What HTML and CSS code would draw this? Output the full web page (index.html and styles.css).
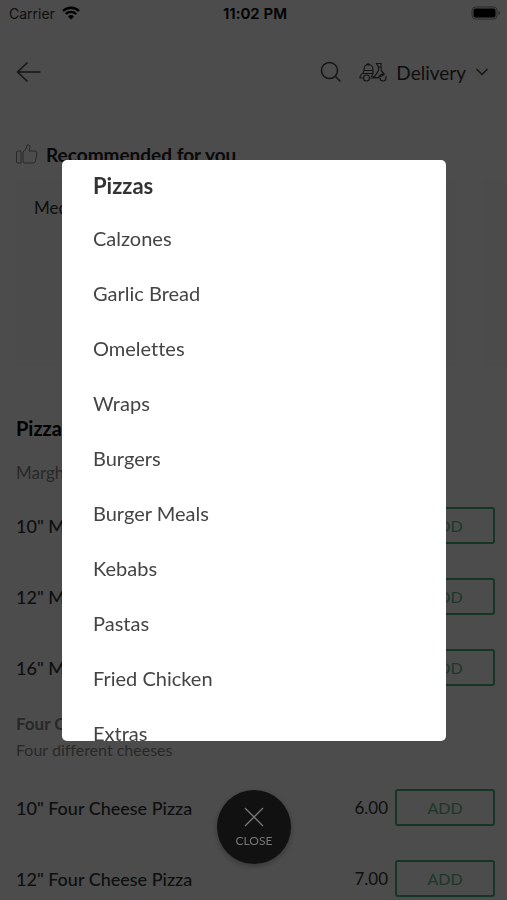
FILE: index.html
```html
<!DOCTYPE html>
<html lang="en">
<head>
  <meta charset="utf-8">
  <meta name="viewport" content="width=device-width, initial-scale=1">
  <title>Menu</title>
  <link rel="stylesheet" href="styles.css">
</head>
<body>
  <div class="page">
    <div class="status-bar">
      <div class="carrier">
        <span>Carrier</span>
        <svg class="wifi" viewBox="0 0 18 14" width="18" height="14">
          <path d="M1 5a11.5 11.5 0 0 1 16 0M3.8 8a7.4 7.4 0 0 1 10.4 0" fill="none" stroke="#000" stroke-width="2.4"/>
          <path d="M9 13.5L6 10.4a4.3 4.3 0 0 1 6 0z"/>
        </svg>
      </div>
      <div class="time">11:02 PM</div>
      <div class="battery">
        <svg viewBox="0 0 30 14" width="30" height="14">
          <rect x="1" y="1" width="25" height="12" rx="3.5" fill="none" stroke="#888"/>
          <rect x="2.5" y="2.5" width="22" height="9" rx="2"/>
          <path d="M27.5 5v4q1.5-.6 1.5-2t-1.5-2z" fill="#888"/>
        </svg>
      </div>
    </div>

    <header class="header">
      <button class="icon-button" aria-label="Back">
        <svg class="icon" viewBox="0 0 26 22" width="26" height="22"><path d="M24.500 11H2M11.500 1.500L1.500 11l10 9.500"/></svg>
      </button>
      <div class="header-actions">
        <button class="icon-button" aria-label="Search">
          <svg class="icon" viewBox="0 0 22 22" width="22" height="22"><circle cx="9.500" cy="9.500" r="8"/><path d="M15.500 15.500l5 5"/></svg>
        </button>
        <button class="delivery">
          <svg class="icon scooter" viewBox="0 0 28 20" width="28" height="20">
            <path d="M5 8.500c0-3.500 1.500-5.500 3-5.500h3c2 0 3 2.500 3 5.500v3M5 8.500h9M7.500 3c0-1.500 3.500-1.500 3.500 0M5 8.500l-1 3M4 11.500h10M4 11.500c-2 .5-3 2.500-3 4.500h3.500M14 11.500l-1.500 3.500M10.500 16h9"/>
            <path d="M17.500 1.500h4.500v3.500h-2.500zM19.500 5v3.500l-3.500 5.500-2 1M22 5l.5 4 3 3.500M19.500 16c0-2.500 3-4.500 6-3.500M14 15.500h5.500l6-3"/>
            <circle cx="7.500" cy="16" r="3"/><path d="M21 16a3 3 0 0 0 6 0v-2"/>
          </svg>
          <span>Delivery</span>
          <svg class="icon" viewBox="0 0 14 10" width="14" height="10"><path d="M1.500 2L7 7.500 12.500 2"/></svg>
        </button>
      </div>
    </header>

    <section class="recommended">
      <h2 class="recommended-title">
        <svg class="thumb" viewBox="0 0 22 20" width="22" height="20">
          <path d="M1.500 7h3.500v12H1.500q-1 0-1-1V8q0-1 1-1zM7 8l3-3 1-4q3-.8 3 2.500L13 7h6q2 0 2 2l-1.500 8q-.5 2-2.500 2H9q-2 0-2-2z"/>
        </svg>
        Recommended for you
      </h2>
      <div class="cards">
        <div class="card">Mediterranean Pizza</div>
        <div class="card"></div>
      </div>
    </section>

    <section class="menu">
      <h2 class="menu-title">Pizzas</h2>
      <div class="group single">
        <h3 class="group-title">Margherita</h3>
      </div>
      <div class="item"><span class="item-name">10" Margherita</span><span class="price">5.00</span><button class="add">ADD</button></div>
      <div class="item"><span class="item-name">12" Margherita</span><span class="price">6.00</span><button class="add">ADD</button></div>
      <div class="item"><span class="item-name">16" Margherita</span><span class="price">9.00</span><button class="add">ADD</button></div>
      <div class="group">
        <h3 class="group-title">Four Cheese Pizza</h3>
        <p class="group-text">Four different cheeses</p>
      </div>
      <div class="item"><span class="item-name">10" Four Cheese Pizza</span><span class="price">6.00</span><button class="add">ADD</button></div>
      <div class="item"><span class="item-name">12" Four Cheese Pizza</span><span class="price">7.00</span><button class="add">ADD</button></div>
    </section>
  </div>

  <div class="overlay">
    <nav class="categories">
      <a class="category active" href="#">Pizzas</a>
      <a class="category" href="#">Calzones</a>
      <a class="category" href="#">Garlic Bread</a>
      <a class="category" href="#">Omelettes</a>
      <a class="category" href="#">Wraps</a>
      <a class="category" href="#">Burgers</a>
      <a class="category" href="#">Burger Meals</a>
      <a class="category" href="#">Kebabs</a>
      <a class="category" href="#">Pastas</a>
      <a class="category" href="#">Fried Chicken</a>
      <a class="category" href="#">Extras</a>
    </nav>
    <button class="close">
      <svg viewBox="0 0 20 20" width="20" height="20"><path d="M1 1l18 18M19 1L1 19" fill="none" stroke="#777" stroke-width="1.300"/></svg>
      CLOSE
    </button>
  </div>
</body>
</html>
```

FILE: styles.css
```css
* {
  box-sizing: border-box;
}

body {
  margin: 0;
  background: #fff;
  color: #333;
  font-family: Lato, "Liberation Sans", sans-serif;
  font-variant-ligatures: none;
}

h2, h3, p {
  margin: 0;
}

button {
  font-family: inherit;
  color: inherit;
  background: none;
  border: none;
  padding: 0;
  cursor: pointer;
}

svg {
  display: block;
}

.page {
  height: 100vh;
  overflow: hidden;
}

.status-bar {
  display: grid;
  grid-template-columns: 1fr auto 1fr;
  align-items: center;
  height: 26px;
  padding: 0 6px 0 9px;
  font-family: Inter, "Liberation Sans", sans-serif;
  font-size: 14px;
  color: #000;
}

.carrier {
  display: flex;
  align-items: center;
  gap: 7px;
  color: #333;
}

.time {
  font-size: 15px;
  font-weight: 600;
}

.battery {
  justify-self: end;
}

.header {
  display: flex;
  justify-content: space-between;
  align-items: center;
  height: 92px;
  padding: 0 18px 0 16px;
}

.header-actions {
  display: flex;
  align-items: center;
  gap: 17px;
}

.icon {
  fill: none;
  stroke: #444;
  stroke-width: 1.5;
}

.scooter {
  stroke-width: 1.2;
}

.delivery {
  display: flex;
  align-items: center;
  gap: 9px;
  font-size: 19px;
}

.recommended {
  padding-top: 24px;
}

.recommended-title {
  display: flex;
  align-items: center;
  gap: 8px;
  height: 24px;
  padding: 0 16px;
  font-size: 19px;
  color: #222;
}

.thumb {
  fill: none;
  stroke: #888;
}

.cards {
  display: flex;
  gap: 28px;
  padding: 14px 0 0 16px;
  overflow: hidden;
}

.card {
  flex: 0 0 440px;
  height: 186px;
  padding: 17px 18px;
  font-size: 17px;
  background: #fafafa;
}

.menu {
  padding: 49px 12px 0 16px;
}

.menu-title {
  margin-bottom: 11px;
  font-size: 20px;
  line-height: 26px;
  color: #000;
}

.group {
  padding: 8px 0 9px;
  color: #888;
}

.group-title {
  font-size: 17px;
  line-height: 26px;
}

.group.single {
  padding-bottom: 4px;
}

.group.single .group-title {
  font-weight: normal;
}

.group-text {
  font-size: 16px;
  line-height: 26px;
}

.item {
  display: flex;
  align-items: center;
  height: 71px;
  font-size: 17px;
}

.item-name {
  flex: 1;
  font-size: 18px;
  font-weight: 500;
}

.price {
  margin-right: 7px;
}

.add {
  width: 100px;
  height: 37px;
  border: 2px solid #46b478;
  border-radius: 3px;
  font-size: 16px;
  color: #5fb98a;
}

.overlay {
  position: fixed;
  inset: 0;
  display: flex;
  flex-direction: column;
  align-items: center;
  gap: 49px;
  padding: 160px 61px 36px 62px;
  background: rgba(0, 0, 0, 0.7);
}

.categories {
  flex: 1;
  width: 100%;
  min-height: 0;
  overflow: hidden;
  border-radius: 5px;
  background: #fff;
}

.category {
  display: block;
  padding-left: 31px;
  font-size: 20px;
  line-height: 55px;
  color: #444;
  text-decoration: none;
}

.category.active {
  font-size: 22px;
  line-height: 51px;
  font-weight: bold;
  color: #333;
}

.close {
  display: flex;
  flex-direction: column;
  align-items: center;
  justify-content: center;
  gap: 6px;
  width: 74px;
  height: 74px;
  border-radius: 50%;
  background: #111;
  box-shadow: 0 2px 6px rgba(0, 0, 0, 0.3);
  font-size: 12px;
  color: #777;
}
```
